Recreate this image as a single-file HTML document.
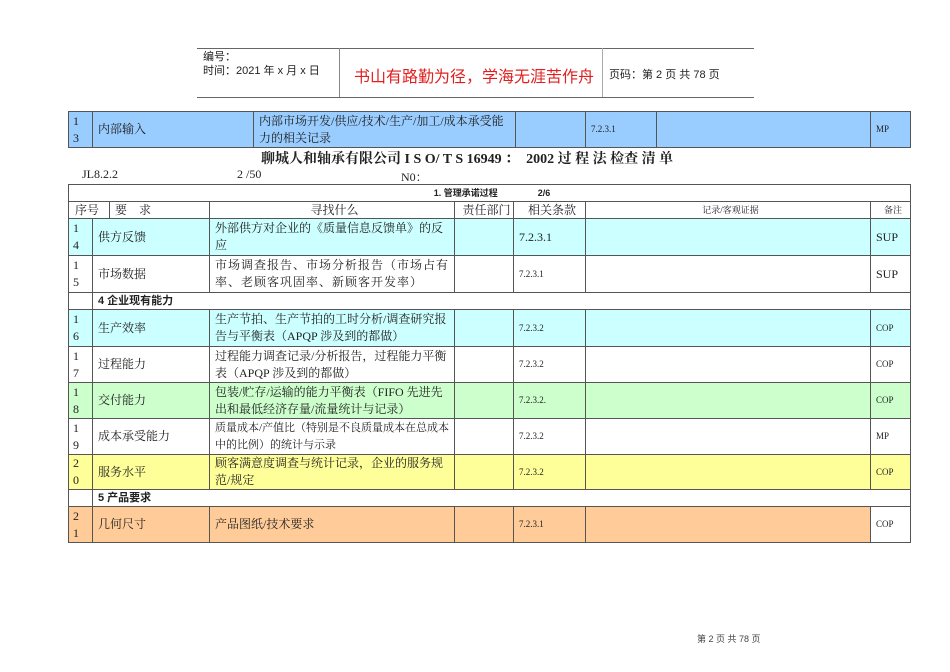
<!DOCTYPE html><html><head><meta charset="utf-8"><style>
body{margin:0;width:950px;height:672px;background:#fff;position:relative;font-family:"Liberation Serif","Noto Serif CJK SC","Noto Sans CJK SC",serif;color:#222;overflow:hidden}
.a{position:absolute}
table{border-collapse:collapse;table-layout:fixed;position:absolute;left:68px}
td{border:1px solid #555;padding:0 0 0 5px;font-size:12px;line-height:17px;overflow:hidden;vertical-align:middle;white-space:normal}
.s{font-size:9px}
.n{padding-left:4px;line-height:17px}
.b{background:#99ccff}.c{background:#ccffff}.g{background:#ccffcc}.y{background:#ffff99}.o{background:#ffcc99}
.sec td{font-weight:bold;font-family:"Liberation Sans","Noto Sans CJK SC",sans-serif;font-size:11px;line-height:15px}
</style></head><body>
<div class="a" style="left:197px;top:48px;width:557px;height:48px;border-top:1px solid #666;border-bottom:1px solid #666"></div>
<div class="a" style="left:339px;top:48px;width:1px;height:49px;background:#888"></div>
<div class="a" style="left:602px;top:48px;width:1px;height:49px;background:#aaa"></div>
<div class="a" style="left:203px;top:50px;font-size:11px;line-height:14px;font-family:'Liberation Sans','Noto Sans CJK SC',sans-serif">编号：<br>时间：2021 年 x 月 x 日</div>
<div class="a" style="left:354px;top:63px;font-size:16px;color:#e02020;font-family:'Liberation Sans','Noto Sans CJK SC',sans-serif">书山有路勤为径，学海无涯苦作舟</div>
<div class="a" style="left:609px;top:66px;font-size:11px;font-family:'Liberation Sans','Noto Sans CJK SC',sans-serif">页码：第 2 页  共 78 页</div>

<table style="top:111px;width:842px">
<colgroup><col width="24"><col width="161"><col width="262"><col width="70"><col width="71"><col width="214"><col width="40"></colgroup>
<tr class="b" style="height:36px"><td class="n">1<br>3</td><td>内部输入</td><td>内部市场开发/供应/技术/生产/加工/成本承受能力的相关记录</td><td></td><td class="s">7.2.3.1</td><td></td><td class="s">MP</td></tr>
</table>
<div class="a" style="left:261px;top:148px;font-size:14px;font-weight:bold;white-space:nowrap">聊城人和轴承有限公司 I S O/ T S 16949 ：&nbsp; 2002 过 程 法 检查 清 单</div>
<div class="a" style="left:82px;top:167px;font-size:12px">JL8.2.2</div>
<div class="a" style="left:237px;top:167px;font-size:12px">2 /50</div>
<div class="a" style="left:401px;top:168px;font-size:12px">N0：</div>

<table style="top:184px;width:842px">
<colgroup><col width="24"><col width="17"><col width="100"><col width="245"><col width="59"><col width="72"><col width="285"><col width="40"></colgroup>
<tr style="height:17px"><td colspan="8" style="text-align:center;font-size:9px;line-height:15px;font-weight:bold;font-family:'Liberation Sans','Noto Sans CJK SC',sans-serif">1. 管理承诺过程 &nbsp;&nbsp;&nbsp;&nbsp;&nbsp;&nbsp;&nbsp;&nbsp;&nbsp;&nbsp;&nbsp;&nbsp;&nbsp;&nbsp;&nbsp;2/6</td></tr>
<tr style="height:17px;text-align:center"><td colspan="2" style="text-align:left;padding-left:6px;line-height:15px">序号</td><td style="text-align:left;line-height:15px">要　求</td><td style="text-align:center;line-height:15px">寻找什么</td><td style="line-height:15px">责任部门</td><td style="line-height:15px">相关条款</td><td class="s" style="line-height:15px">记录/客观证据</td><td class="s" style="line-height:15px">备注</td></tr>
<tr class="c" style="height:37px"><td class="n">1<br>4</td><td colspan="2">供方反馈</td><td>外部供方对企业的《质量信息反馈单》的反应</td><td></td><td>7.2.3.1</td><td></td><td>SUP</td></tr>
<tr style="height:37px"><td class="n">1<br>5</td><td colspan="2">市场数据</td><td style="letter-spacing:1px">市场调查报告、市场分析报告（市场占有率、老顾客巩固率、新顾客开发率）</td><td></td><td class="s">7.2.3.1</td><td></td><td>SUP</td></tr>
<tr class="sec" style="height:17px"><td></td><td colspan="7">4 企业现有能力</td></tr>
<tr class="c" style="height:37px"><td class="n">1<br>6</td><td colspan="2">生产效率</td><td>生产节拍、生产节拍的工时分析/调查研究报告与平衡表（APQP 涉及到的都做）</td><td></td><td class="s">7.2.3.2</td><td></td><td class="s">COP</td></tr>
<tr style="height:36px"><td class="n">1<br>7</td><td colspan="2">过程能力</td><td>过程能力调查记录/分析报告，过程能力平衡表（APQP 涉及到的都做）</td><td></td><td class="s">7.2.3.2</td><td></td><td class="s">COP</td></tr>
<tr class="g" style="height:36px"><td class="n">1<br>8</td><td colspan="2">交付能力</td><td>包装/贮存/运输的能力平衡表（FIFO 先进先出和最低经济存量/流量统计与记录）</td><td></td><td class="s">7.2.3.2.</td><td></td><td class="s">COP</td></tr>
<tr style="height:36px"><td class="n">1<br>9</td><td colspan="2">成本承受能力</td><td style="font-size:11px">质量成本/产值比（特别是不良质量成本在总成本中的比例）的统计与示录</td><td></td><td class="s">7.2.3.2</td><td></td><td class="s">MP</td></tr>
<tr class="y" style="height:34px"><td class="n">2<br>0</td><td colspan="2">服务水平</td><td>顾客满意度调查与统计记录，企业的服务规范/规定</td><td></td><td class="s">7.2.3.2</td><td></td><td class="s">COP</td></tr>
<tr class="sec" style="height:17px"><td></td><td colspan="7">5 产品要求</td></tr>
<tr class="o" style="height:36px"><td class="n">2<br>1</td><td colspan="2">几何尺寸</td><td>产品图纸/技术要求</td><td></td><td class="s">7.2.3.1</td><td></td><td class="s" style="background:#fff">COP</td></tr>
</table>
<div class="a" style="left:697px;top:632px;font-size:9px;color:#444;font-family:'Liberation Sans','Noto Sans CJK SC',sans-serif">第 2 页 共 78 页</div>
</body></html>
